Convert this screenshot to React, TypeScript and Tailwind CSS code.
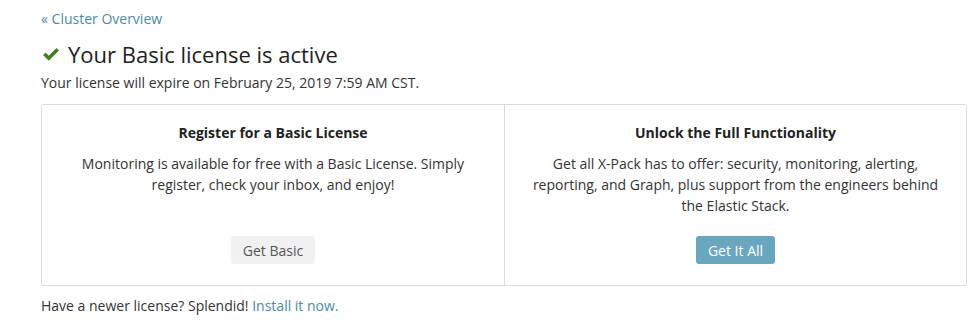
import React from "react";

const FONT = { fontFamily: '"Open Sans", "Noto Sans", sans-serif' };

function CheckIcon() {
  return (
    <svg viewBox="0 0 20 16" className="h-[15px] w-[20px]" aria-hidden="true">
      <path d="M1.5 8.6 L4.2 5.9 L7.6 9.3 L15.8 1.1 L18.5 3.8 L7.6 14.7 Z" fill="#3f7f1f" />
    </svg>
  );
}

export default function App() {
  return (
    <div className="min-h-[334px] bg-white pl-[41px] pr-[1px] pt-[8px] text-[14px] leading-[21px] text-[#333]" style={FONT}>
      <a href="#" className="text-[#4a8ba3]">« Cluster Overview</a>

      <h1 className="mt-[10px] flex items-center gap-[7px] text-[22px] leading-[30px] text-[#222]">
        <CheckIcon />
        <span>Your Basic license is active</span>
      </h1>
      <p className="mt-[3px]">Your license will expire on February 25, 2019 7:59 AM CST.</p>

      <div className="mt-[11px] grid grid-cols-2 rounded-[3px] border border-[#dcdcdc]">
        <div className="flex flex-col items-center px-6 pb-[21px] pt-[17px] text-center">
          <h2 className="font-bold text-[#222]">Register for a Basic License</h2>
          <p className="mt-[10px] max-w-[400px]">
            Monitoring is available for free with a Basic License. Simply register, check your inbox, and enjoy!
          </p>
          <button className="mt-auto h-[28px] rounded-[3px] bg-[#f1f1f1] px-[12px] text-[#555]">Get Basic</button>
        </div>
        <div className="flex flex-col items-center border-l border-[#dcdcdc] px-6 pb-[21px] pt-[17px] text-center">
          <h2 className="font-bold text-[#222]">Unlock the Full Functionality</h2>
          <p className="mt-[10px]">
            Get all X-Pack has to offer: security, monitoring, alerting, reporting, and Graph, plus support from the
            engineers behind the Elastic Stack.
          </p>
          <button className="mt-[20px] h-[28px] rounded-[3px] bg-[#6aa7bf] px-[12px] text-white">Get It All</button>
        </div>
      </div>

      <p className="mt-[9px]">
        Have a newer license? Splendid! <a href="#" className="text-[#4a8ba3]">Install it now.</a>
      </p>
    </div>
  );
}
